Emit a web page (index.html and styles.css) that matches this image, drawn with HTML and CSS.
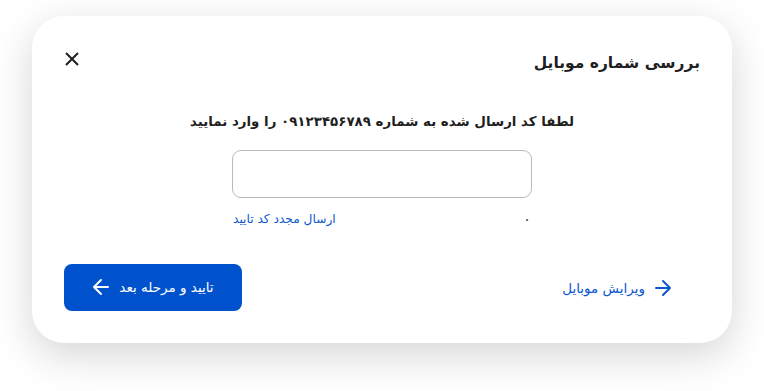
FILE: index.html
```html
<!DOCTYPE html>
<html lang="fa" dir="rtl">
<head>
<meta charset="utf-8">
<title>بررسی شماره موبایل</title>
<link rel="stylesheet" href="styles.css">
</head>
<body>
<div class="modal">
  <div class="modal-head">
    <h2 class="title">بررسی شماره موبایل</h2>
    <button class="close" aria-label="بستن">
      <svg width="16" height="16" viewBox="0 0 16 16"><path d="M2 2 L14 14 M14 2 L2 14" stroke="#1f1f1f" stroke-width="2" fill="none"/></svg>
    </button>
  </div>
  <p class="hint">لطفا کد ارسال شده به شماره ۰۹۱۲۳۴۵۶۷۸۹ را وارد نمایید</p>
  <div class="otp">
    <input class="otp-input" type="text" aria-label="کد تایید">
    <div class="otp-meta">
      <span class="timer">۰</span>
      <a class="resend" href="#">ارسال مجدد کد تایید</a>
    </div>
  </div>
  <div class="actions">
    <button class="btn-text">
      <svg width="18" height="18" viewBox="0 0 18 18"><path d="M2 9 H16 M9 2 L16 9 L9 16" stroke="#0b57d0" stroke-width="2" fill="none" stroke-linecap="round" stroke-linejoin="round"/></svg>
      <span>ویرایش موبایل</span>
    </button>
    <button class="btn-primary">
      <span>تایید و مرحله بعد</span>
      <svg width="18" height="18" viewBox="0 0 18 18"><path d="M16 9 H2 M9 2 L2 9 L9 16" stroke="#fff" stroke-width="2" fill="none" stroke-linecap="round" stroke-linejoin="round"/></svg>
    </button>
  </div>
</div>
</body>
</html>
```
FILE: styles.css
```css
html, body {
  margin: 0;
  padding: 0;
  background: #ffffff;
}
body {
  font-family: "DejaVu Sans", "Noto Sans", sans-serif;
  color: #1f1f1f;
  padding: 16px 32px 0 32px;
  min-height: 391px;
  box-sizing: border-box;
}
.modal {
  width: 700px;
  height: 327px;
  box-sizing: border-box;
  background: #fff;
  border-radius: 32px;
  box-shadow: 0 12px 40px rgba(0, 0, 0, 0.17);
  padding: 29px 32px 32px 32px;
  display: flex;
  flex-direction: column;
}
.modal-head {
  display: flex;
  justify-content: space-between;
  align-items: center;
  height: 30px;
}
.title {
  margin: 0;
  font-size: 15.5px;
  font-weight: bold;
  color: #1f1f1f;
  padding-top: 6px;
}
.close {
  background: none;
  border: 0;
  padding: 0;
  width: 16px;
  height: 16px;
  display: flex;
  cursor: pointer;
  margin-top: -3px;
}
.hint {
  margin: 36px 0 0 0;
  text-align: center;
  font-size: 13.4px;
  font-weight: bold;
  color: #1f1f1f;
  line-height: 22px;
}
.otp {
  width: 300px;
  margin: 17px auto 0 auto;
}
.otp-input {
  display: block;
  width: 300px;
  height: 48px;
  box-sizing: border-box;
  border: 1px solid #b9b9b9;
  border-radius: 9px;
  outline: none;
  font-family: inherit;
}
.otp-meta {
  display: flex;
  justify-content: space-between;
  align-items: center;
  margin-top: 12px;
  padding: 0 1px;
}
.timer {
  font-size: 15px;
  color: #444;
  padding-left: 3px;
}
.resend {
  font-size: 12.2px;
  color: #0b57d0;
  text-decoration: none;
}
.actions {
  margin-top: auto;
  display: flex;
  justify-content: space-between;
  align-items: center;
}
.btn-text, .btn-primary {
  height: 47px;
  border: 0;
  border-radius: 8px;
  display: flex;
  align-items: center;
  gap: 9px;
  font-family: inherit;
  font-size: 13.5px;
  font-weight: normal;
  cursor: pointer;
}
.btn-text {
  background: transparent;
  color: #0b57d0;
  padding: 0 28px 0 0;
}
.btn-primary {
  width: 178px;
  justify-content: center;
  background: #0052cc;
  color: #fff;
  margin-top: -1px;
}
```
